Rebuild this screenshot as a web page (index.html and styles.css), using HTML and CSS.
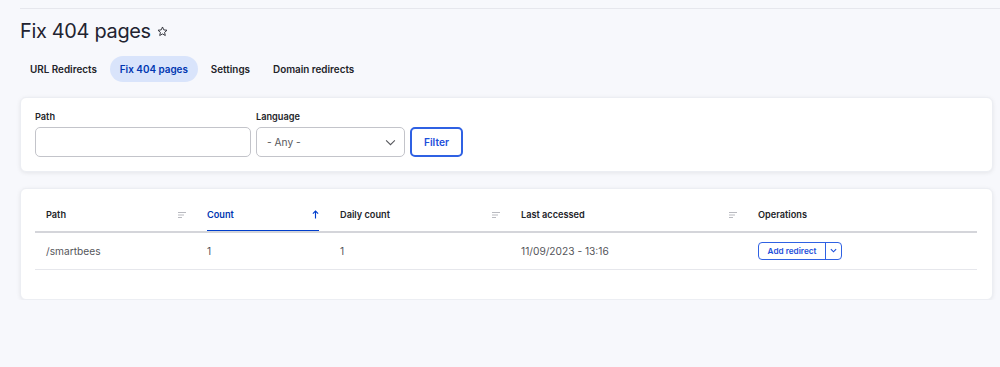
FILE: index.html
```html
<!DOCTYPE html>
<html lang="en">
<head>
<meta charset="utf-8">
<title>Fix 404 pages</title>
<link rel="stylesheet" href="styles.css">
</head>
<body>
<div class="page">
  <div class="topline"></div>
  <h1 class="title">Fix 404 pages
    <svg class="star" viewBox="0 0 20 20" width="11" height="11"><path d="M10 1.8l2.4 5.3 5.8.6-4.4 3.9 1.3 5.7L10 14.4l-5.1 2.9 1.3-5.7-4.4-3.9 5.8-.6z" fill="none" stroke="#2b2c33" stroke-width="1.7" stroke-linejoin="round"/></svg>
  </h1>
  <nav class="tabs">
    <a class="tab">URL Redirects</a>
    <a class="tab active">Fix 404 pages</a>
    <a class="tab">Settings</a>
    <a class="tab">Domain redirects</a>
  </nav>

  <section class="card filter-card">
    <div class="field path-field">
      <label class="label">Path</label>
      <div class="input"></div>
    </div>
    <div class="field lang-field">
      <label class="label">Language</label>
      <div class="input select">
        <span>- Any -</span>
        <svg viewBox="0 0 12 8" width="11" height="7"><path d="M1 1.5l5 5 5-5" fill="none" stroke="#55565b" stroke-width="1.2"/></svg>
      </div>
    </div>
    <button class="btn-filter">Filter</button>
  </section>

  <section class="card table-card">
    <table class="tbl">
      <colgroup>
        <col class="c1"><col class="c2"><col class="c3"><col class="c4"><col class="c5">
      </colgroup>
      <thead>
        <tr>
          <th><div class="th-in"><span>Path</span><svg class="sort" viewBox="0 0 8 6" width="8" height="6"><path d="M0 .5h8M0 3h6M0 5.5h4" stroke="#b9bac0" stroke-width="1"/></svg></div></th>
          <th><div class="th-in active"><span>Count</span><svg class="arrow" viewBox="0 0 8 10" width="7" height="9"><path d="M4 9.5V1M1 4l3-3 3 3" fill="none" stroke="#003ecc" stroke-width="1.3"/></svg></div></th>
          <th><div class="th-in"><span>Daily count</span><svg class="sort" viewBox="0 0 8 6" width="8" height="6"><path d="M0 .5h8M0 3h6M0 5.5h4" stroke="#b9bac0" stroke-width="1"/></svg></div></th>
          <th><div class="th-in"><span>Last accessed</span><svg class="sort" viewBox="0 0 8 6" width="8" height="6"><path d="M0 .5h8M0 3h6M0 5.5h4" stroke="#b9bac0" stroke-width="1"/></svg></div></th>
          <th><div class="th-in"><span>Operations</span></div></th>
        </tr>
      </thead>
      <tbody>
        <tr>
          <td>/smartbees</td>
          <td>1</td>
          <td>1</td>
          <td>11/09/2023 - 13:16</td>
          <td>
            <div class="dropbutton">
              <span class="db-main">Add redirect</span>
              <span class="db-toggle"><svg viewBox="0 0 8 5" width="7" height="5"><path d="M1 1l3 3 3-3" fill="none" stroke="#1c4fdb" stroke-width="1.3"/></svg></span>
            </div>
          </td>
        </tr>
      </tbody>
    </table>
  </section>
</div>
</body>
</html>
```

FILE: styles.css
```css
* { box-sizing: border-box; }
html, body { margin: 0; padding: 0; }
body {
  background: #f7f8fc;
  font-family: Inter, "Noto Sans", "Liberation Sans", sans-serif;
  color: #222330;
}
.page {
  padding: 8px 7px 0 20px;
}
.topline {
  height: 1px;
  background: #e6e7ed;
  margin-right: -7px;
}
.title {
  margin: 9px 0 0 0;
  font-size: 19.9px;
  font-weight: 400;
  line-height: 26px;
  letter-spacing: -0.3px;
  color: #222330;
  display: flex;
  align-items: center;
  gap: 6px;
}
.star { margin-top: 1px; }
.tabs {
  display: flex;
  align-items: center;
  margin-top: 12px;
}
.tab {
  font-size: 9.9px;
  font-weight: 600;
  color: #232429;
  height: 26px;
  line-height: 26px;
  padding: 0 10px;
  border-radius: 13px;
  margin-right: 3px;
}
.tab.active {
  background: #d9e4fb;
  color: #0036b1;
}
.card {
  background: #fff;
  border-radius: 6px;
  box-shadow: 0 1px 4px rgba(0, 0, 0, 0.08);
  border: 1px solid #eceef3;
}
.filter-card {
  margin-top: 15px;
  height: 75px;
  padding: 0 15px 14px 14px;
  display: flex;
  align-items: flex-end;
}
.field { display: flex; flex-direction: column; }
.path-field { width: 216px; margin-right: 5px; }
.lang-field { width: 149px; margin-right: 5px; }
.label {
  font-size: 9.2px;
  font-weight: 600;
  color: #232429;
  margin-bottom: 4px;
  line-height: 12px;
}
.input {
  height: 30px;
  border: 1px solid #c3c4ca;
  border-radius: 5px;
  background: #fff;
}
.select {
  display: flex;
  align-items: center;
  justify-content: space-between;
  padding: 0 8px 0 10px;
  font-size: 10.2px;
  color: #55565b;
}
.btn-filter {
  height: 30px;
  width: 53px;
  border: 2px solid #2f61e3;
  border-radius: 5px;
  background: #fff;
  color: #1c4fdb;
  font-family: inherit;
  font-size: 10.2px;
  font-weight: 600;
  padding: 0;
}
.table-card {
  margin-top: 16px;
  height: 112px;
  padding: 10px 15px 0 14px;
}
.tbl {
  width: 100%;
  border-collapse: collapse;
  table-layout: fixed;
}
.c1 { width: 161px; }
.c2 { width: 133px; }
.c3 { width: 181px; }
.c4 { width: 237px; }
.tbl th {
  padding: 0 10px 0 11px;
  border-bottom: 2px solid #d4d5da;
  text-align: left;
  font-size: 9.2px;
  font-weight: 600;
  color: #232429;
}
.th-in {
  height: 33px;
  display: flex;
  align-items: center;
  justify-content: space-between;
  border-bottom: 2px solid transparent;
  margin-bottom: -1px;
}
.th-in.active {
  color: #0036b1;
  border-bottom-color: #003ecc;
}
.tbl td {
  padding: 0 10px 0 11px;
  height: 37px;
  border-bottom: 1px solid #e6e7ec;
  font-size: 10.2px;
  color: #55565b;
}
.dropbutton {
  display: inline-flex;
  height: 18px;
  border: 1px solid #2f61e3;
  border-radius: 4px;
  overflow: hidden;
  vertical-align: middle;
}
.db-main {
  width: 67px;
  display: flex;
  align-items: center;
  justify-content: center;
  font-size: 8.2px;
  font-weight: 600;
  color: #1c4fdb;
  border-right: 1px solid #2f61e3;
}
.db-toggle {
  width: 15px;
  display: flex;
  align-items: center;
  justify-content: center;
}
```
